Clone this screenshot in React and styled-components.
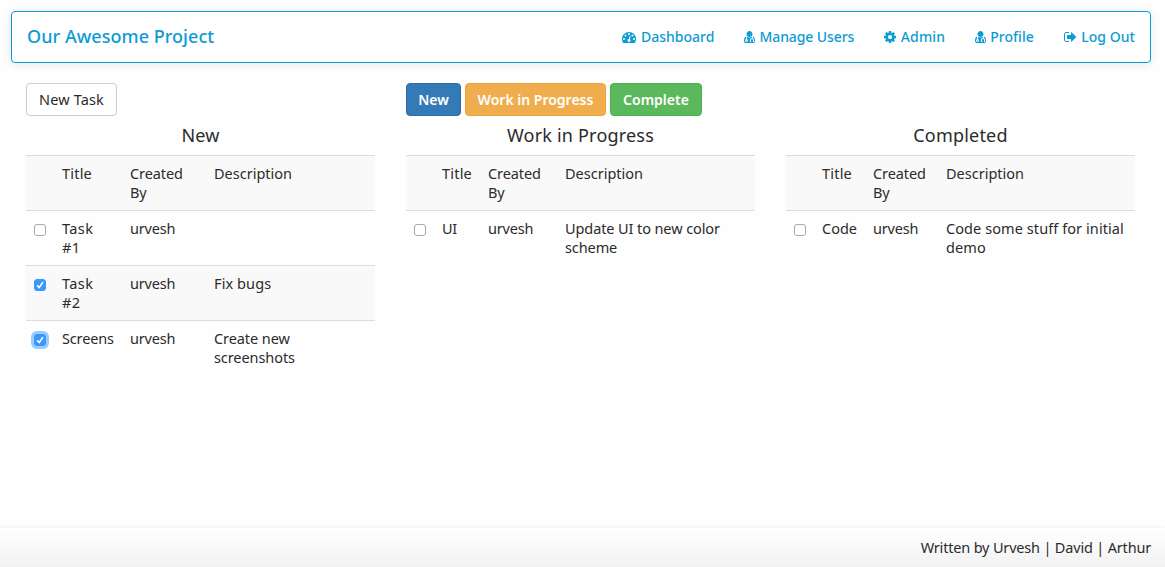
import React from "react";
import styled, { createGlobalStyle } from "styled-components";

const GlobalStyle = createGlobalStyle`
  *, *::before, *::after { box-sizing: border-box; }
  body {
    margin: 0;
    background: #fefefe;
    color: #2b2b2b;
    font: 14.5px/19px "Noto Sans", "Open Sans", sans-serif;
  }
`;

const Page = styled.div`
  display: flex;
  flex-direction: column;
  height: 567px;
  overflow: hidden;
`;

const Navbar = styled.nav`
  display: flex;
  justify-content: space-between;
  align-items: center;
  height: 52px;
  margin: 11px 14px 0 11px;
  padding: 0 15px 2px;
  background: #fff;
  border: 1px solid #049fd3;
  border-radius: 4px;
  box-shadow: 0 1px 10px rgba(0, 0, 0, 0.1);
  color: #0c9bd3;
`;

const Brand = styled.a`
  font-size: 18px;
  font-weight: 500;
  letter-spacing: 0.05px;
  white-space: nowrap;
`;

const NavList = styled.div`
  display: flex;
  gap: 29.8px;
`;

const NavLink = styled.a`
  display: flex;
  align-items: center;
  justify-content: space-between;
  width: ${(p) => p.$width}px;
  font-size: 14px;
  font-weight: 500;
  letter-spacing: ${(p) => p.$spacing || 0}px;
  white-space: nowrap;
`;

const NavIcon = styled.svg`
  flex: none;
  height: 14px;
  margin-top: 1px;
  fill: currentColor;
`;

const Board = styled.main`
  display: grid;
  grid-template-columns: repeat(3, 349px);
  column-gap: 31px;
  padding: 20px 0 0 26px;
  flex: 1;
  align-content: start;
`;

const Column = styled.section`
  display: flex;
  flex-direction: column;
`;

const Toolbar = styled.div`
  display: flex;
  gap: 4px;
  height: 33px;
`;

const tones = {
  plain: ["#fff", "#ccc", "#2b2b2b"],
  blue: ["#337ab7", "#2e6da4", "#fff"],
  orange: ["#f0ad4e", "#eea236", "#fff"],
  green: ["#5cb85c", "#4cae4c", "#fff"],
};

const Button = styled.button`
  width: ${(p) => p.$width}px;
  height: 33px;
  padding: 0;
  font: inherit;
  font-size: ${(p) => (p.$tone === "plain" ? 14.5 : 14)}px;
  font-weight: ${(p) => (p.$tone === "plain" ? 400 : 600)};
  letter-spacing: ${(p) => (p.$tone === "plain" ? 0.15 : 0)}px;
  white-space: nowrap;
  border-radius: 4px;
  background: ${(p) => tones[p.$tone][0]};
  border: 1px solid ${(p) => tones[p.$tone][1]};
  color: ${(p) => tones[p.$tone][2]};
`;

const Heading = styled.h4`
  margin: 10px 0;
  font-size: 18px;
  line-height: 19px;
  font-weight: 400;
  letter-spacing: 0.2px;
  text-align: center;
`;

const Table = styled.table`
  width: 100%;
  table-layout: fixed;
  border-collapse: separate;
  border-spacing: 0;
`;

const Row = styled.tr`
  height: 55px;
  &:nth-child(odd) { background: #f9f9f9; }
`;

const Cell = styled.td`
  padding: 8px 0 8px 8px;
  border-top: 1px solid #ddd;
  vertical-align: top;
  white-space: pre-line;
  letter-spacing: ${(p) => p.$spacing || 0}px;
`;

const Check = styled.svg`
  display: block;
  width: 12px;
  height: 12px;
  margin-top: 5px;
  border-radius: 3px;
  background: ${(p) => (p.$checked ? "#3b99fc" : "#fff")};
  border: 1px solid ${(p) => (p.$checked ? "#3b97f8" : "#aaa")};
  box-shadow: ${(p) => (p.$focused ? "0 0 0 3px #9bcbfb" : "none")};
  fill: none;
  stroke: #fff;
  stroke-width: 1.6;
`;

const Footer = styled.footer`
  height: 39px;
  padding: 10px 14px 0 0;
  text-align: right;
  letter-spacing: -0.18px;
  background: linear-gradient(#fff, #f2f2f2);
  box-shadow: 0 0 4px rgba(0, 0, 0, 0.09);
`;

const icons = {
  dashboard: {
    width: 1792,
    path: "M384 1152a128 128 0 1 0-256 0a128 128 0 1 0 256 0zM576 704a128 128 0 1 0-256 0a128 128 0 1 0 256 0zM1004 1185l101-382q6-26-7.5-48.5t-38.5-29.5-48 6.5-30 39.5l-101 382q-60 5-107 43.5t-63 98.5q-20 77 20 146t117 89 146-20 89-117q16-60-6-117t-72-91zM1664 1152a128 128 0 1 0-256 0a128 128 0 1 0 256 0zM1024 512a128 128 0 1 0-256 0a128 128 0 1 0 256 0zM1472 704a128 128 0 1 0-256 0a128 128 0 1 0 256 0zM1792 1152q0 261-141 483-19 29-54 29h-1402q-35 0-54-29-141-221-141-483 0-182 71-348t191-286 286-191 348-71 348 71 286 191 191 286 71 348z",
  },
  user: {
    width: 1408,
    flip: true,
    path: "M384 192q0 26-19 45t-45 19t-45-19t-19-45t19-45t45-19t45 19t19 45zM1408 131q0-121-73-190t-194-69h-874q-121 0-194 69t-73 190q0 68 5.5 131t24 138t47.5 132.5t81 103t120 60.5q-22-52-22-120v-203q-58-20-93-70t-35-111q0-80 56-136t136-56t136 56t56 136q0 61-35.5 111t-92.5 70v203q0 62 25 93q132-104 295-104t295 104q25-31 25-93v-64q-106 0-181-75t-75-181v-89q-32-29-32-71q0-40 28-68t68-28t68 28t28 68q0 42-32 71v89q0 52 38 90t90 38t90-38t38-90v-89q-32-29-32-71q0-40 28-68t68-28t68 28t28 68q0 42-32 71v89q0 68-34.5 127.5t-93.5 93.5q0 10 .5 42.5t0 48t-2.5 41.5t-7 47t-13 40q68-15 120-60.5t81-103t47.5-132.5t24-138t5.5-131zM1088 1024q0-159-112.5-271.5t-271.5-112.5t-271.5 112.5t-112.5 271.5t112.5 271.5t271.5 112.5t271.5-112.5t112.5-271.5z",
  },
  cog: {
    width: 1536,
    offset: 128,
    path: "M1152 896q0-106-75-181t-181-75-181 75-75 181 75 181 181 75 181-75 75-181zm512-109v222q0 12-8 23t-20 13l-185 28q-19 54-39 91 35 50 107 138 10 12 10 25t-9 23q-27 37-99 108t-94 71q-12 0-26-9l-138-108q-44 23-91 38-16 136-29 186-7 28-36 28h-222q-14 0-24.5-8.5t-11.5-21.5l-28-184q-49-16-90-37l-141 107q-10 9-25 9-14 0-25-11-126-114-165-168-7-10-7-23 0-12 8-23 15-21 51-66.5t54-70.5q-27-50-41-99l-183-27q-13-2-21-12.5t-8-23.5v-222q0-12 8-23t19-13l186-28q14-46 39-92-40-57-107-138-10-12-10-24 0-10 9-23 26-36 98.5-107.5t94.5-71.5q13 0 26 10l138 107q44-23 91-38 16-136 29-186 7-28 36-28h222q14 0 24.5 8.5t11.5 21.5l28 184q49 16 90 37l142-107q9-9 24-9 13 0 25 10 129 119 165 170 7 8 7 22 0 12-8 23-15 21-51 66.5t-54 70.5q26 50 41 98l183 28q13 2 21 12.5t8 23.5z",
  },
  logout: {
    width: 1664,
    path: "M640 1440q0 4 1 20t.5 26.5-3 23.5-10 19.5-20.5 6.5h-320q-119 0-203.5-84.5t-84.5-203.5v-704q0-119 84.5-203.5t203.5-84.5h320q13 0 22.5 9.5t9.5 22.5q0 4 1 20t.5 26.5-3 23.5-10 19.5-20.5 6.5h-320q-66 0-113 47t-47 113v704q0 66 47 113t113 47h312l11.5 1 11.5 3 8 5.5 7 9 2 13.5zm928-544q0 26-19 45l-544 544q-19 19-45 19t-45-19-19-45v-288h-448q-26 0-45-19t-19-45v-384q0-26 19-45t45-19h448v-288q0-26 19-45t45-19 45 19l544 544q19 19 19 45z",
  },
};

function Icon({ name }) {
  const { width, path, flip, offset = 0 } = icons[name];
  return (
    <NavIcon viewBox={`${offset} 0 ${width} 1792`} width={width / 128} aria-hidden="true">
      <path d={path} transform={flip ? "translate(0 1536) scale(1 -1)" : undefined} />
    </NavIcon>
  );
}

function Checkbox({ checked, focused }) {
  return (
    <Check viewBox="0 0 10 10" $checked={checked} $focused={focused} role="checkbox" aria-checked={!!checked}>
      {checked && <path d="M2.1 5.4L4.2 7.6L7.9 2.1" />}
    </Check>
  );
}

const links = [
  { icon: "dashboard", label: "Dashboard", width: 92 },
  { icon: "user", label: "Manage Users", width: 110, spacing: -0.1 },
  { icon: "cog", label: "Admin", width: 61, spacing: 0.1 },
  { icon: "user", label: "Profile", width: 59, spacing: 0.05 },
  { icon: "logout", label: "Log Out", width: 71.4, spacing: 0.05 },
];

const columns = [
  {
    title: "New",
    widths: [28, 68, 84, 169],
    buttons: [{ label: "New Task", tone: "plain", width: 91 }],
    tasks: [
      { title: "Task\n#1", titleSpacing: 0.4, by: "urvesh", text: "" },
      { title: "Task\n#2", titleSpacing: 0.4, by: "urvesh", text: "Fix bugs", spacing: 0.1, checked: true },
      { title: "Screens", titleSpacing: -0.15, by: "urvesh", text: "Create new\nscreenshots", spacing: -0.08, checked: true, focused: true },
    ],
  },
  {
    title: "Work in Progress",
    widths: [28, 46, 77, 198],
    buttons: [
      { label: "New", tone: "blue", width: 55 },
      { label: "Work in Progress", tone: "orange", width: 141 },
      { label: "Complete", tone: "green", width: 92 },
    ],
    tasks: [{ title: "UI", titleSpacing: -0.4, by: "urvesh", text: "Update UI to new color\nscheme", spacing: -0.1 }],
  },
  {
    title: "Completed",
    widths: [28, 51, 73, 197],
    buttons: [],
    tasks: [{ title: "Code", by: "urvesh", text: "Code some stuff for initial\ndemo", spacing: 0.08 }],
  },
];

function TaskColumn({ title, widths, buttons, tasks }) {
  return (
    <Column>
      <Toolbar>
        {buttons.map((b) => (
          <Button key={b.label} $tone={b.tone} $width={b.width}>{b.label}</Button>
        ))}
      </Toolbar>
      <Heading>{title}</Heading>
      <Table>
        <colgroup>{widths.map((w, i) => <col key={i} width={w} />)}</colgroup>
        <tbody>
          <Row>
            <Cell />
            <Cell $spacing={0.2}>Title</Cell>
            <Cell $spacing={-0.1}>{"Created\nBy"}</Cell>
            <Cell>Description</Cell>
          </Row>
          {tasks.map((t) => (
            <Row key={t.title}>
              <Cell><Checkbox checked={t.checked} focused={t.focused} /></Cell>
              <Cell $spacing={t.titleSpacing}>{t.title}</Cell>
              <Cell $spacing={-0.2}>{t.by}</Cell>
              <Cell $spacing={t.spacing}>{t.text}</Cell>
            </Row>
          ))}
        </tbody>
      </Table>
    </Column>
  );
}

export default function App() {
  return (
    <Page>
      <GlobalStyle />
      <Navbar>
        <Brand>Our Awesome Project</Brand>
        <NavList>
          {links.map((l) => (
            <NavLink key={l.label} $width={l.width} $spacing={l.spacing}>
              <Icon name={l.icon} />
              <span>{l.label}</span>
            </NavLink>
          ))}
        </NavList>
      </Navbar>
      <Board>
        {columns.map((c) => <TaskColumn key={c.title} {...c} />)}
      </Board>
      <Footer>Written by Urvesh | David | Arthur</Footer>
    </Page>
  );
}
